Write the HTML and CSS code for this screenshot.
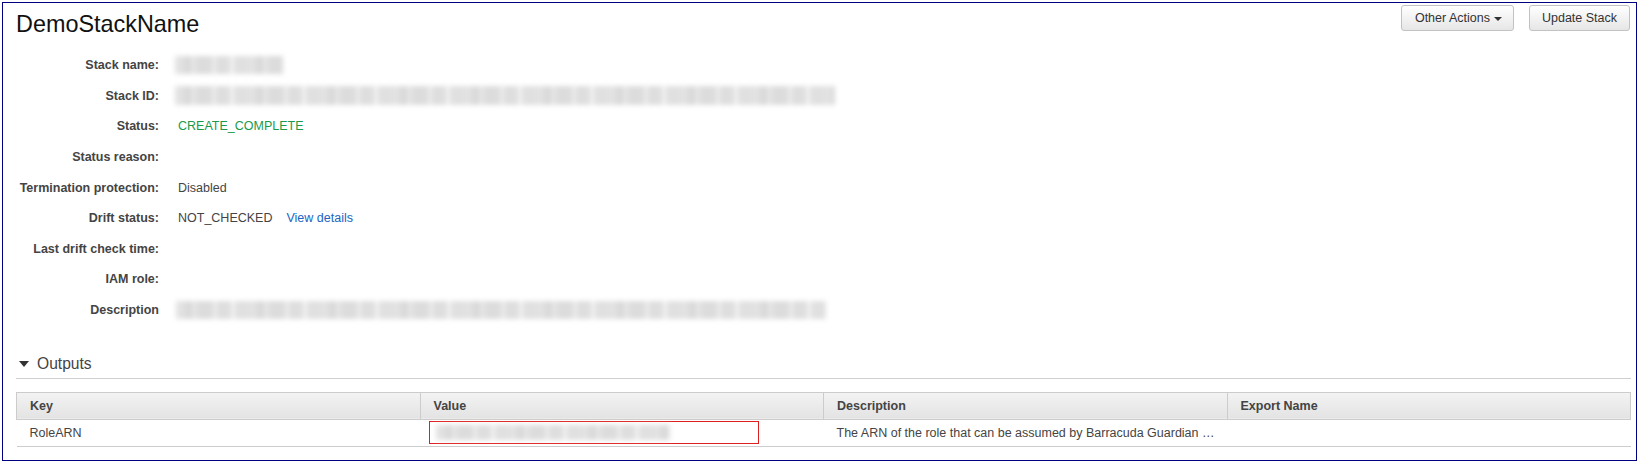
FILE: index.html
```html
<!DOCTYPE html>
<html lang="en">
<head>
<meta charset="utf-8">
<title>DemoStackName</title>
<link rel="stylesheet" href="styles.css">
</head>
<body>
<div class="frame">
  <header class="head">
    <h1 class="title">DemoStackName</h1>
    <div class="actions">
      <button class="btn">Other Actions<span class="caret"></span></button>
      <button class="btn">Update Stack</button>
    </div>
  </header>

  <dl class="details">
    <dt>Stack name:</dt>
    <dd><span class="redact redact-name"></span></dd>
    <dt>Stack ID:</dt>
    <dd><span class="redact redact-id"></span></dd>
    <dt>Status:</dt>
    <dd class="ok">CREATE_COMPLETE</dd>
    <dt>Status reason:</dt>
    <dd></dd>
    <dt>Termination protection:</dt>
    <dd>Disabled</dd>
    <dt>Drift status:</dt>
    <dd>NOT_CHECKED<a class="link" href="#">View details</a></dd>
    <dt>Last drift check time:</dt>
    <dd></dd>
    <dt>IAM role:</dt>
    <dd></dd>
    <dt>Description</dt>
    <dd><span class="redact redact-desc"></span></dd>
  </dl>

  <section class="outputs">
    <h2 class="sec-title"><span class="tri"></span>Outputs</h2>
    <table class="out-table">
      <thead>
        <tr><th>Key</th><th>Value</th><th>Description</th><th>Export Name</th></tr>
      </thead>
      <tbody>
        <tr>
          <td>RoleARN</td>
          <td class="val-cell"><span class="mark"><span class="redact redact-arn"></span></span></td>
          <td>The ARN of the role that can be assumed by Barracuda Guardian …</td>
          <td></td>
        </tr>
      </tbody>
    </table>
  </section>
</div>
</body>
</html>
```

FILE: styles.css
```css
html, body {
  margin: 0;
  padding: 0;
  background: #ffffff;
}

body {
  font-family: "Liberation Sans", Arial, sans-serif;
  font-size: 12.5px;
  color: #444444;
}

.frame {
  box-sizing: border-box;
  margin: 2px 0 0 2px;
  width: 1635px;
  height: 459px;
  border: 1px solid #000080;
  background: #ffffff;
}

/* header */
.head {
  display: flex;
  justify-content: space-between;
  align-items: flex-start;
  padding: 0 6px 0 13px;
}

.title {
  margin: 7px 0 0 0;
  font-size: 23.4px;
  line-height: 28px;
  font-weight: normal;
  color: #111111;
}

.actions {
  display: flex;
  gap: 15px;
  margin-top: 2px;
}

.btn {
  display: flex;
  align-items: center;
  height: 26px;
  padding: 0 12px;
  font-family: "Liberation Sans", Arial, sans-serif;
  font-size: 12.5px;
  color: #333333;
  background: linear-gradient(#ffffff, #e6e6e6);
  border: 1px solid #c2c2c2;
  border-radius: 3px;
  box-sizing: border-box;
}

.btn:first-child {
  padding: 0 11px 0 13px;
}

.caret {
  display: inline-block;
  width: 0;
  height: 0;
  margin-left: 4px;
  margin-top: 1px;
  border-left: 4px solid transparent;
  border-right: 4px solid transparent;
  border-top: 4px solid #333333;
}

/* details */
.details {
  display: grid;
  grid-template-columns: 156px 1fr;
  column-gap: 19px;
  grid-auto-rows: 30.6px;
  align-items: center;
  margin: 12px 0 0 0;
}

.details dt {
  text-align: right;
  font-weight: bold;
  color: #444444;
}

.details dd {
  margin: 0;
  display: flex;
  align-items: center;
  color: #444444;
}

.ok {
  color: #1a9a4a !important;
}

.link {
  color: #1a66c2;
  text-decoration: none;
  margin-left: 14px;
}

.redact {
  display: inline-block;
  height: 18px;
  background:
    repeating-linear-gradient(90deg,
      #e2e2e2 0 9px, #d9d9d9 9px 16px, #e6e6e6 16px 21px,
      #dcdcdc 21px 37px, #ececec 37px 41px, #dedede 41px 55px,
      #f2f2f2 55px 59px, #e0e0e0 59px 72px);
  filter: blur(2.6px);
}

.redact-name { width: 108px; margin-left: -3px; }
.redact-id   { width: 660px; height: 19px; margin-left: -3px; }
.redact-desc { width: 650px; margin-left: -2px; }
.redact-arn  { width: 234px; height: 15px; }

/* outputs */
.outputs {
  margin: 28.6px 0 0 13px;
  width: 1615px;
}

.sec-title {
  display: flex;
  align-items: center;
  margin: 0;
  padding: 0 0 4px 3px;
  height: 20px;
  font-size: 15.6px;
  font-weight: normal;
  line-height: 20px;
  color: #444444;
  border-bottom: 1px solid #cfcfcf;
}

.tri {
  display: inline-block;
  width: 0;
  height: 0;
  margin-right: 8px;
  margin-top: 1px;
  border-left: 5px solid transparent;
  border-right: 5px solid transparent;
  border-top: 6px solid #333333;
}

.out-table {
  margin-top: 13px;
  width: 1615px;
  table-layout: fixed;
  border-collapse: collapse;
}

.out-table th {
  height: 26px;
  padding: 0 10px 0 13px;
  text-align: left;
  font-weight: bold;
  color: #444444;
  background: linear-gradient(#f3f3f3, #e3e3e3);
  border: 1px solid #cccccc;
}

.out-table td {
  height: 26px;
  padding: 0 6px 0 13px;
  color: #444444;
  white-space: nowrap;
  border-bottom: 1px solid #cccccc;
}

.out-table td.val-cell {
  padding: 0 0 0 9px;
}

.mark {
  display: flex;
  align-items: center;
  box-sizing: border-box;
  width: 330px;
  height: 23px;
  padding-left: 6px;
  border: 1px solid #e02020;
}
```
